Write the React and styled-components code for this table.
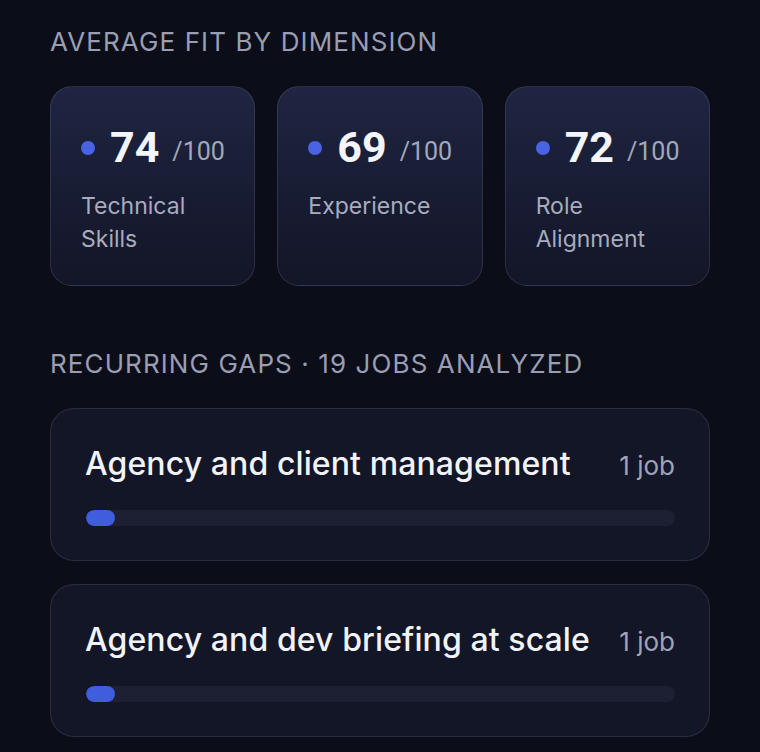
import React from "react";
import styled, { createGlobalStyle } from "styled-components";

const dimensions = [
  { score: 74, label: "Technical Skills" },
  { score: 69, label: "Experience" },
  { score: 72, label: "Role Alignment" },
];

const gaps = [
  { name: "Agency and client management", jobs: 1, share: 5 },
  { name: "Agency and dev briefing at scale", jobs: 1, share: 5 },
];

export default function App() {
  return (
    <>
      <GlobalStyle />
      <Page>
        <SectionTitle>Average fit by dimension</SectionTitle>
        <StatGrid>
          {dimensions.map((d) => (
            <StatCard key={d.label}>
              <ScoreRow>
                <Dot />
                <Score>{d.score}</Score>
                <OutOf>/100</OutOf>
              </ScoreRow>
              <StatLabel>{d.label}</StatLabel>
            </StatCard>
          ))}
        </StatGrid>

        <SectionTitle $spaced>Recurring gaps · 19 jobs analyzed</SectionTitle>
        <GapList>
          {gaps.map((g) => (
            <GapCard key={g.name}>
              <GapHeader>
                <GapName>{g.name}</GapName>
                <GapCount>
                  {g.jobs} {g.jobs === 1 ? "job" : "jobs"}
                </GapCount>
              </GapHeader>
              <Track>
                <Fill style={{ width: `${g.share}%` }} />
              </Track>
            </GapCard>
          ))}
        </GapList>
      </Page>
    </>
  );
}

const GlobalStyle = createGlobalStyle`
  html, body {
    margin: 0;
    background: #0b0d19;
  }
  body {
    font-family: "Inter", "Roboto", "Liberation Sans", sans-serif;
    -webkit-font-smoothing: antialiased;
  }
`;

const Page = styled.div`
  min-height: 100vh;
  box-sizing: border-box;
  padding: 26px 50px 0;
  background: #0b0d19;
  overflow: hidden;
`;

const SectionTitle = styled.h2`
  margin: ${(p) => (p.$spaced ? "62px" : "0")} 0 0;
  font-size: 26px;
  font-weight: 400;
  line-height: 32px;
  letter-spacing: 1.1px;
  text-transform: uppercase;
  color: #9a9eb2;
`;

const StatGrid = styled.div`
  display: grid;
  grid-template-columns: repeat(3, minmax(0, 1fr));
  gap: 22px;
  margin-top: 28px;
`;

const StatCard = styled.div`
  height: 200px;
  box-sizing: border-box;
  padding: 34px 20px 0 30px;
  border-radius: 22px;
  border: 1px solid rgba(255, 255, 255, 0.1);
  background: linear-gradient(180deg, #1f2542 0%, #181c33 55%, #131627 100%);
`;

const ScoreRow = styled.div`
  display: flex;
  align-items: center;
  height: 52px;
  font-family: "Roboto", "Liberation Sans", sans-serif;
`;

const Dot = styled.span`
  width: 14px;
  height: 14px;
  border-radius: 50%;
  background: #4a63e3;
  margin-right: 15px;
  margin-top: 2px;
  flex-shrink: 0;
`;

const Score = styled.span`
  font-size: 43px;
  font-weight: 700;
  color: #f4f5fa;
  line-height: 1;
`;

const OutOf = styled.span`
  font-size: 25px;
  color: #a3a7b8;
  margin-left: 13px;
  margin-top: 8px;
`;

const StatLabel = styled.div`
  margin-top: 17px;
  font-size: 23px;
  line-height: 33px;
  color: #a8acbd;
  max-width: 120px;
`;

const GapList = styled.div`
  display: flex;
  flex-direction: column;
  gap: 23px;
  margin-top: 28px;
`;

const GapCard = styled.div`
  height: 153px;
  box-sizing: border-box;
  padding: 35px 34px 0 34px;
  border-radius: 24px;
  border: 1px solid rgba(255, 255, 255, 0.1);
  background: #131626;
`;

const GapHeader = styled.div`
  display: flex;
  justify-content: space-between;
  align-items: baseline;
`;

const GapName = styled.div`
  font-size: 32px;
  font-weight: 500;
  letter-spacing: 0.1px;
  color: #f2f3f8;
  line-height: 40px;
`;

const GapCount = styled.div`
  font-size: 26px;
  color: #9fa3b5;
`;

const Track = styled.div`
  margin: 26px 0 0 1px;
  height: 16px;
  border-radius: 8px;
  background: #1c2032;
  overflow: hidden;
`;

const Fill = styled.div`
  height: 100%;
  border-radius: 8px;
  background: #3f5ddc;
`;
